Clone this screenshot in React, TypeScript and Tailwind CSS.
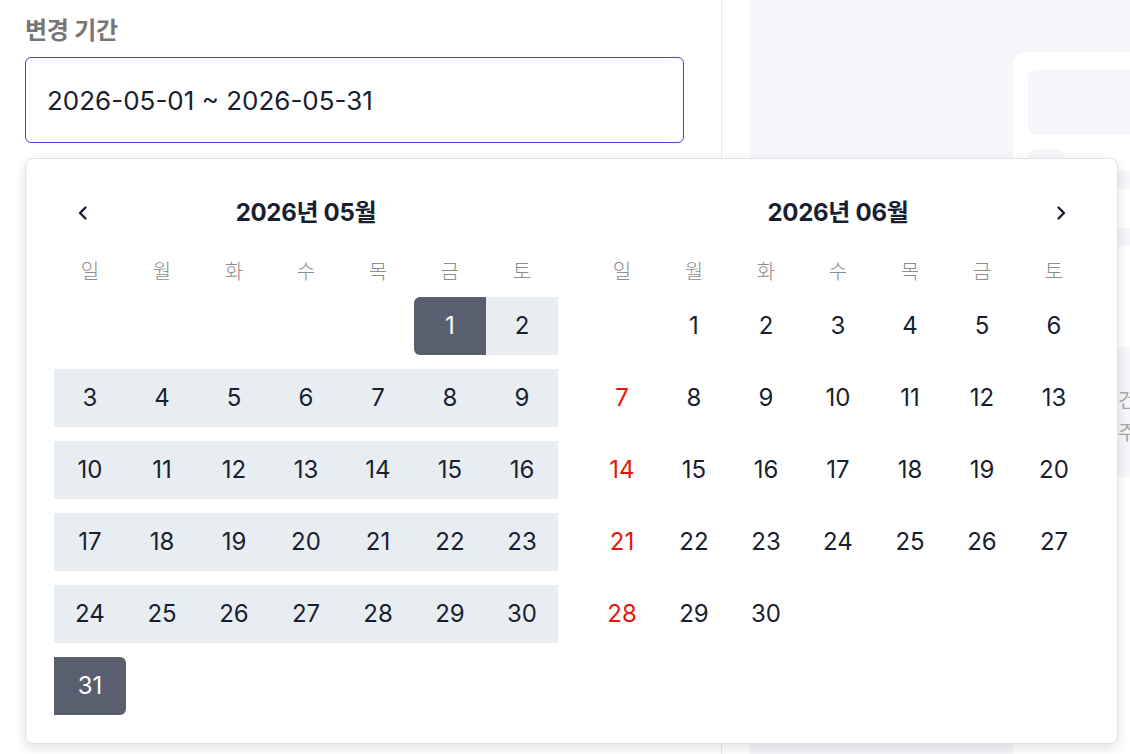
import React from 'react';

const FONT = { fontFamily: "Inter, 'Noto Sans CJK KR', sans-serif" };

const WEEKDAYS = ['일', '월', '화', '수', '목', '금', '토'];

interface MonthProps {
  title: string;
  firstWeekday: number;
  days: number;
  rangeStart?: number;
  rangeEnd?: number;
  side: 'left' | 'right';
}

function ChevronLeft() {
  return (
    <svg width="14" height="16" viewBox="0 0 14 16" fill="none">
      <path d="M9.5 2.5L4 8l5.5 5.5" stroke="#191f2e" strokeWidth="2.4" strokeLinecap="round" strokeLinejoin="round" />
    </svg>
  );
}

function ChevronRight() {
  return (
    <svg width="14" height="16" viewBox="0 0 14 16" fill="none">
      <path d="M4.5 2.5L10 8l-5.5 5.5" stroke="#191f2e" strokeWidth="2.4" strokeLinecap="round" strokeLinejoin="round" />
    </svg>
  );
}

function Month({ title, firstWeekday, days, rangeStart, rangeEnd, side }: MonthProps) {
  const cells: (number | null)[] = [];
  for (let i = 0; i < firstWeekday; i++) cells.push(null);
  for (let d = 1; d <= days; d++) cells.push(d);
  while (cells.length % 7 !== 0) cells.push(null);
  const rows: (number | null)[][] = [];
  for (let i = 0; i < cells.length; i += 7) rows.push(cells.slice(i, i + 7));

  return (
    <div className="w-[504px] shrink-0 flex flex-col">
      {/* Header */}
      <div className="grid grid-cols-[58px_1fr_58px] h-[36px] items-center">
        <div className="flex justify-center">{side === 'left' && <ChevronLeft />}</div>
        <div className="text-center text-[24px] font-bold text-[#191f2e] tracking-[-0.3px]">{title}</div>
        <div className="flex justify-center">{side === 'right' && <ChevronRight />}</div>
      </div>

      {/* Weekdays */}
      <div className="grid grid-cols-7 h-[30px] mt-[26px] items-center">
        {WEEKDAYS.map((w) => (
          <div key={w} className="text-center text-[20px] text-[#8c8c8c] font-light">
            {w}
          </div>
        ))}
      </div>

      {/* Days */}
      <div className="flex flex-col gap-[14px] mt-[10px]">
        {rows.map((row, ri) => (
          <div key={ri} className="grid grid-cols-7">
            {row.map((d, ci) => {
              if (d === null) return <div key={ci} className="h-[58px]" />;
              const isStart = d === rangeStart;
              const isEnd = d === rangeEnd;
              const inRange = rangeStart !== undefined && rangeEnd !== undefined && d > rangeStart && d < rangeEnd;
              let cls = 'h-[58px] flex items-center justify-center text-[24px] ';
              if (isStart || isEnd) {
                cls += 'bg-[#5a5f6f] text-white ';
                if (isStart) cls += 'rounded-l-[6px] ';
                if (isEnd) cls += 'rounded-r-[6px] ';
              } else if (inRange) {
                cls += 'bg-[#e8edf2] text-[#191f2e] ';
              } else if (ci === 0) {
                cls += 'text-[#e3170a] ';
              } else {
                cls += 'text-[#191f2e] ';
              }
              return (
                <div key={ci} className={cls}>
                  {d}
                </div>
              );
            })}
          </div>
        ))}
      </div>
    </div>
  );
}

export default function App() {
  return (
    <div className="relative h-[754px] w-[1130px] overflow-hidden bg-white flex" style={FONT}>
      {/* Left form panel */}
      <div className="w-[722px] shrink-0 border-r border-[#ebebeb] pl-[25px] pt-[16px]">
        <div className="text-[24px] font-semibold text-[#767676] leading-[30px] tracking-[-0.3px]">변경 기간</div>
        <div className="mt-[11px] w-[659px] h-[86px] border border-[#5b3ad9] rounded-[6px] flex items-center pl-[21px]">
          <span className="text-[26px] text-[#191f2e]">2026-05-01 ~ 2026-05-31</span>
        </div>
      </div>
      <div className="w-[28px] shrink-0 bg-white" />

      {/* Right preview panel */}
      <div className="flex-1 min-w-0 bg-[#f5f6fa] pt-[52px] pl-[263px]">
        <div className="bg-white rounded-tl-[12px] h-full pl-[15px] pt-[18px] flex flex-col">
          <div className="h-[65px] bg-[#f5f6fa] rounded-l-[8px]" />
          <div className="mt-[14px] flex flex-col">
            <div className="w-[36px] h-[22px] bg-[#f5f6fa] rounded-t-[8px]" />
            <div className="h-[18px] bg-[#f5f6fa]" />
          </div>
          <div className="mt-[39px] h-[18px] bg-[#f5f6fa]" />
          <div className="mt-[101px] h-[130px] bg-[#f5f6fa] pl-[90px] pt-[38px] text-[20px] text-[#a8a8a8] leading-[32px] whitespace-nowrap">
            <div>건수</div>
            <div>주의</div>
          </div>
        </div>
      </div>

      {/* Date range popover */}
      <div className="absolute left-[25px] top-[158px] w-[1093px] h-[586px] bg-white border border-[#e2e2e2] rounded-[8px] shadow-[0_4px_12px_rgba(0,0,0,0.12)] flex gap-[28px] pl-[28px] pt-[36px]">
        <Month title="2026년 05월" firstWeekday={5} days={31} rangeStart={1} rangeEnd={31} side="left" />
        <Month title="2026년 06월" firstWeekday={1} days={30} side="right" />
      </div>
    </div>
  );
}
